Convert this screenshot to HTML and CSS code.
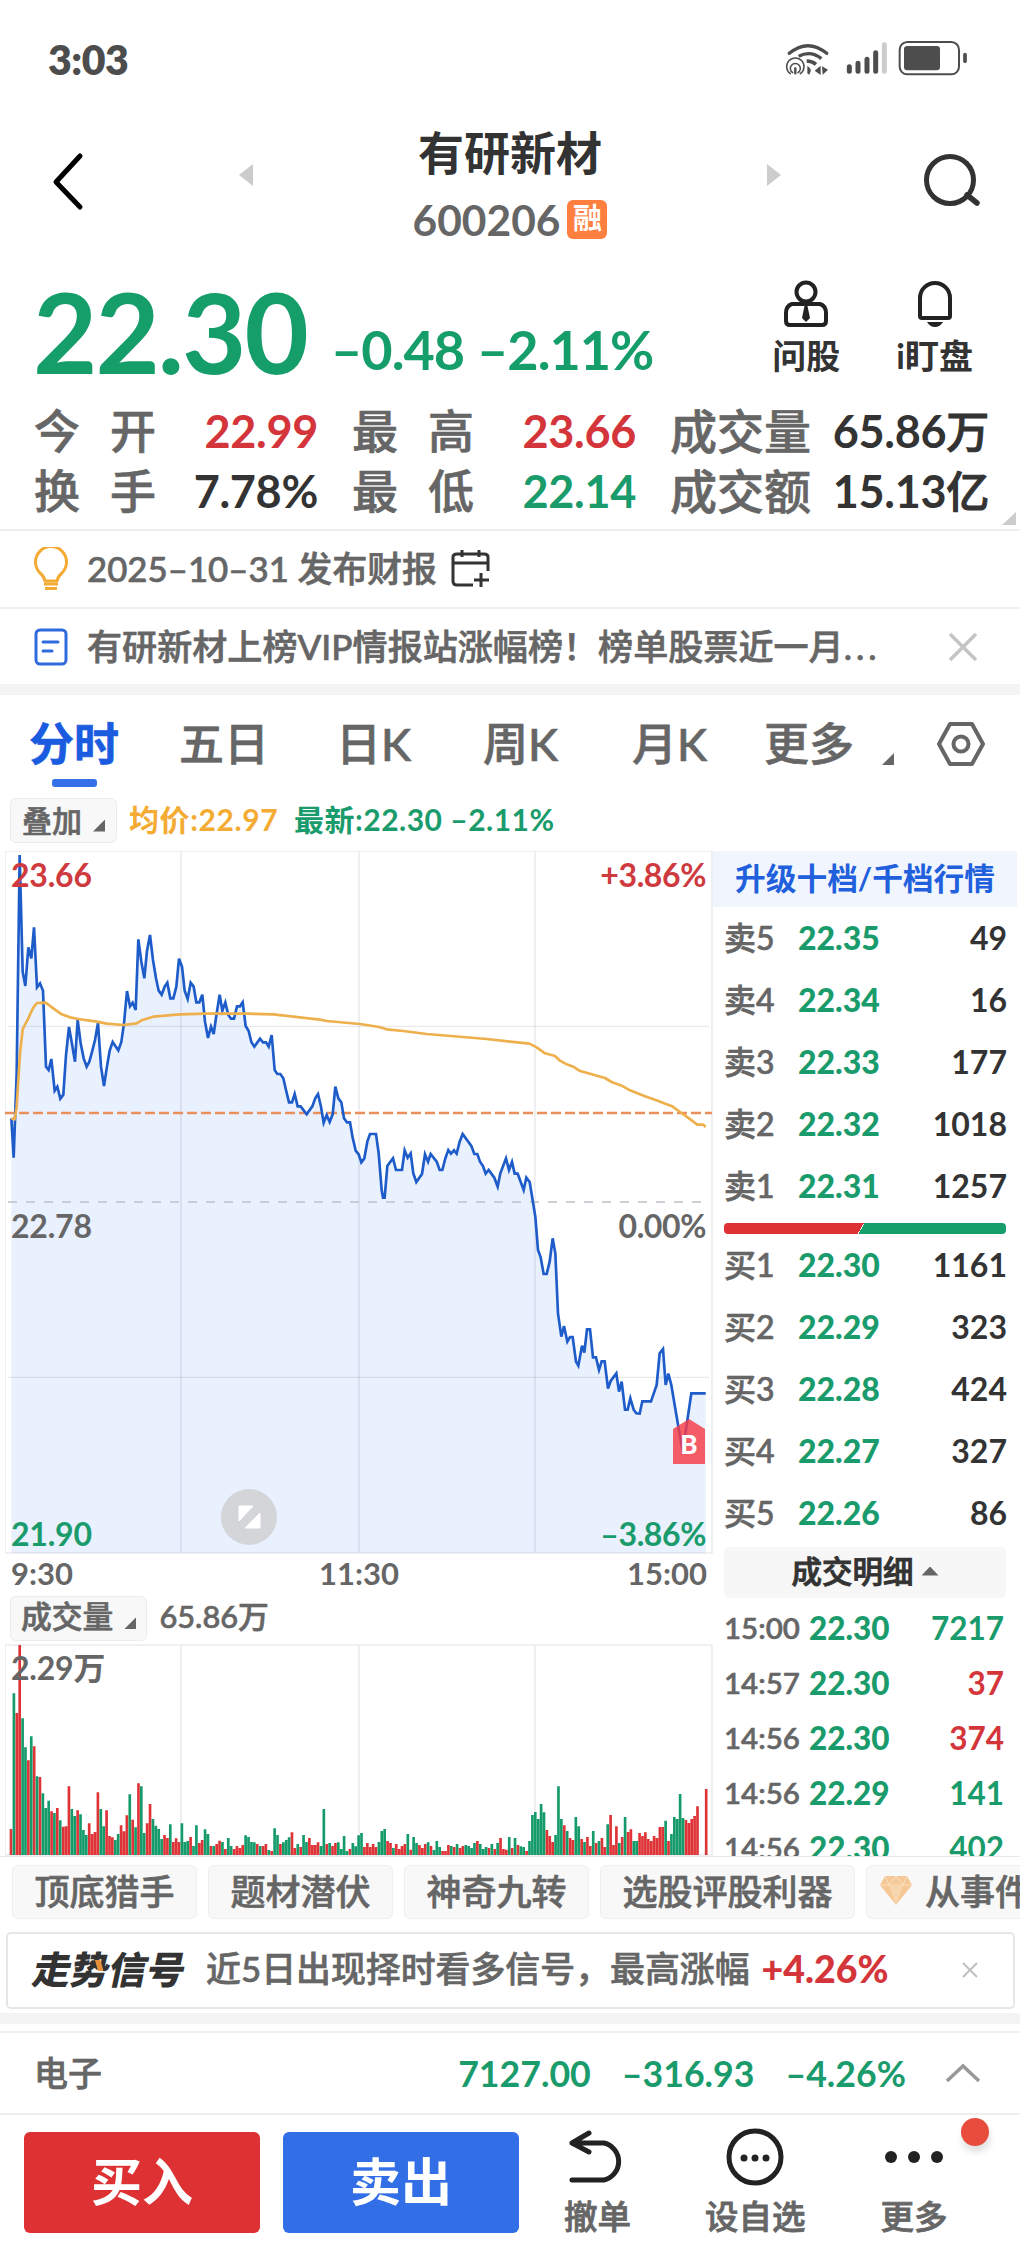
FILE: index.html
```html
<!DOCTYPE html>
<html lang="zh-CN">
<head>
<meta charset="utf-8">
<title>有研新材 600206</title>
<link rel="stylesheet" href="styles.css">
</head>
<body>
<header class="status">
  <span class="clock">3:03</span>
  <svg class="status-icons" width="200" height="40" viewBox="0 0 600 120">
    <g fill="none" stroke="#4d4d4d" stroke-linecap="round">
      <path d="M28 43Q84 -3 140 43" stroke-width="10"/>
      <path d="M56 52Q92 33 124 59" stroke-width="10" stroke-linecap="butt"/>
      <path d="M80 66Q96 66 108 76" stroke-width="11" stroke-linecap="butt"/>
      <path d="M31 104A26 26 0 1 1 61 104" stroke-width="4.500"/>
      <path d="M38 101A15 15 0 1 1 54 101" stroke-width="4.500"/>
      <path d="M46 88V103" stroke-width="7"/>
    </g>
    <path d="M82 80Q100 92 87 107L82 103ZM104 95L122 80V108ZM126 82L144 92 128 107Z" fill="#4d4d4d"/>
    <g stroke="#4d4d4d" stroke-width="15" stroke-linecap="round">
      <path d="M208 83V97M234 73V97M261 61V97M287 41V97"/>
      <path d="M313 17V97" stroke="#ccc"/>
    </g>
    <rect x="359" y="9" width="178" height="97" rx="23" fill="none" stroke="#4d4d4d" stroke-width="6"/>
    <rect x="372" y="21" width="108" height="73" rx="10" fill="#4d4d4d"/>
    <path d="M555 47V67" stroke="#4d4d4d" stroke-width="11" stroke-linecap="round"/>
  </svg>
</header>

<nav class="titlebar">
  <svg width="34" height="60" viewBox="0 0 34 60"><path d="M29 4L5 30L29 55" fill="none" stroke="#000" stroke-width="5" stroke-linecap="round" stroke-linejoin="round"/></svg>
  <i class="tri-left"></i>
  <div class="title">
    <h1>有研新材</h1>
    <p><span>600206</span><b class="badge">融</b></p>
  </div>
  <i class="tri-right"></i>
  <svg width="60" height="56" viewBox="0 0 60 56"><circle cx="27" cy="26" r="23.500" fill="none" stroke="#333" stroke-width="5"/><path d="M44 41L54 49" stroke="#333" stroke-width="5.500" stroke-linecap="round"/></svg>
</nav>

<section class="quote">
  <span class="price">22.30</span>
  <span class="diff">–0.48</span>
  <span class="diff pct">–2.11%</span>
  <div class="tools">
    <div>
      <svg width="46" height="48" viewBox="0 0 46 48" fill="none" stroke="#222" stroke-width="4"><circle cx="23" cy="12" r="9.500"/><path d="M9 24H37Q43 26 43 33V41Q43 45 39 45H7Q3 45 3 41V33Q3 26 9 24Z"/><path d="M21.500 26H24.500L27 38L23 42L19 38Z" fill="#222" stroke="none"/></svg>
      <span>问股</span>
    </div>
    <div>
      <svg width="40" height="48" viewBox="0 0 40 48"><path d="M5 36V18A15 15 0 0 1 35 18V36Q35 38 33 38H7Q5 38 5 36Z" fill="none" stroke="#222" stroke-width="4"/><path d="M12 42H28Q25 47 20 47T12 42Z" fill="#222"/></svg>
      <span>i盯盘</span>
    </div>
  </div>
</section>

<section class="stats">
  <dl><dt class="wide">今开</dt><dd class="up">22.99</dd></dl>
  <dl><dt class="wide">最高</dt><dd class="up">23.66</dd></dl>
  <dl><dt>成交量</dt><dd>65.86<small>万</small></dd></dl>
  <dl><dt class="wide">换手</dt><dd>7.78%</dd></dl>
  <dl><dt class="wide">最低</dt><dd class="down">22.14</dd></dl>
  <dl><dt>成交额</dt><dd>15.13<small>亿</small></dd></dl>
  <i class="expand"></i>
</section>

<div class="notice">
  <svg width="36" height="44" viewBox="0 0 36 44" fill="none" stroke="#f3ab34" stroke-width="3"><path d="M12 34Q11 29 7 26A15.500 15.500 0 1 1 29 26Q25 29 24 34Z" stroke-linejoin="round"/><path d="M11 37H25M12 41.500H24"/></svg>
  <span class="date">2025–10–31 发布财报</span>
  <svg width="40" height="40" viewBox="0 0 40 40" fill="none" stroke="#333" stroke-width="3"><path d="M22 36H6Q2 36 2 32V8Q2 5 6 5H33Q37 5 37 8V22M2 14H37M11 1V8M28 1V8M30 24V38M23 31H38"/></svg>
</div>
<div class="notice second">
  <svg width="36" height="40" viewBox="0 0 36 40" fill="none" stroke="#2f6bdc" stroke-width="3"><rect x="3" y="3" width="30" height="34" rx="4"/><path d="M10 15H25M10 24H19" stroke-linecap="round"/></svg>
  <span>有研新材上榜VIP情报站涨幅榜！榜单股票近一月<span class="dots">...</span></span>
  <svg class="close" width="30" height="30" viewBox="0 0 30 30"><path d="M2 2L28 28M28 2L2 28" stroke="#c4c4c4" stroke-width="3.500"/></svg>
</div>
<div class="band"></div>

<nav class="tabs">
  <span class="on">分时</span><span>五日</span><span>日K</span><span>周K</span><span>月K</span><span>更多</span>
  <i class="corner"></i>
  <svg width="48" height="46" viewBox="0 0 48 46" fill="none" stroke="#666" stroke-width="4"><path d="M13 3H35L46 23L35 43H13L2 23Z" stroke-linejoin="round"/><circle cx="24" cy="23" r="7.500"/></svg>
</nav>

<div class="legend">
  <span class="chip">叠加<i class="corner"></i></span>
  <span class="avg">均价:22.97</span>
  <span class="last">最新:22.30 –2.11%</span>
</div>

<main class="board">
  <section class="charts">
    <div class="price-chart">
      <svg width="708" height="703" viewBox="15 33 2124 2109" id="price">
        <path d="M15 33H2136V2139H15ZM543 33V2139M1077 33V2139M1605 33V2139" fill="none" stroke="#ebecee" stroke-width="5"/>
        <path id="area" fill="#2468f2" fill-opacity=".1"/>
        <path d="M24 559H2127M24 1612H2127" stroke="#000" stroke-opacity=".1" stroke-width="3"/>
        <path d="M24 1086H2120" stroke="#bfc1c8" stroke-width="5" stroke-dasharray="27 27"/>
        <path d="M15 819H2136" stroke="#e98f5c" stroke-width="8" stroke-dasharray="30 12"/>
        <path id="line" fill="none" stroke="#1e5cca" stroke-width="8" stroke-linejoin="miter"/>
        <path id="mean" fill="none" stroke="#eeb04c" stroke-width="8" stroke-linejoin="round"/>
      </svg>
      <span class="lab tl up">23.66</span><span class="lab tr up">+3.86%</span>
      <span class="lab ml">22.78</span><span class="lab mr">0.00%</span>
      <span class="lab bl down">21.90</span><span class="lab br down">–3.86%</span>
      <svg class="rotate" width="56" height="56" viewBox="0 0 56 56"><circle cx="28" cy="28" r="28" fill="#d3d5d9"/><path d="M18 17H32L18 32ZM39 24V39H24Z" fill="#fff" stroke="#fff" stroke-linejoin="round"/></svg>
      <span class="buy-flag">B</span>
    </div>
    <div class="axis"><span>9:30</span><span>11:30</span><span>15:00</span></div>
    <div class="vol-head"><span class="chip">成交量<i class="corner"></i></span><span class="vol-total">65.86万</span></div>
    <div class="vol-chart">
      <svg width="708" height="212" viewBox="15 255 2124 636" id="volume">
        <path d="M15 258H2136V888H15ZM543 258V888M1077 258V888M1605 258V888" fill="none" stroke="#ebecee" stroke-width="5"/>
        <path id="vr" stroke="#de3337" stroke-width="8"/>
        <path id="vg" stroke="#159b6a" stroke-width="8"/>
      </svg>
      <span class="lab">2.29万</span>
    </div>
  </section>
  <aside class="book">
    <div class="promo">升级十档/千档行情</div>
    <ul class="depth">
      <li><span>卖5</span><b>22.35</b><em>49</em></li>
      <li><span>卖4</span><b>22.34</b><em>16</em></li>
      <li><span>卖3</span><b>22.33</b><em>177</em></li>
      <li><span>卖2</span><b>22.32</b><em>1018</em></li>
      <li><span>卖1</span><b>22.31</b><em>1257</em></li>
    </ul>
    <div class="ratio"></div>
    <ul class="depth">
      <li><span>买1</span><b>22.30</b><em>1161</em></li>
      <li><span>买2</span><b>22.29</b><em>323</em></li>
      <li><span>买3</span><b>22.28</b><em>424</em></li>
      <li><span>买4</span><b>22.27</b><em>327</em></li>
      <li><span>买5</span><b>22.26</b><em>86</em></li>
    </ul>
    <div class="detail-head">成交明细<i></i></div>
    <ul class="ticks">
      <li><span>15:00</span><b>22.30</b><em class="down">7217</em></li>
      <li><span>14:57</span><b>22.30</b><em class="up">37</em></li>
      <li><span>14:56</span><b>22.30</b><em class="up">374</em></li>
      <li><span>14:56</span><b>22.29</b><em class="down">141</em></li>
      <li><span>14:56</span><b>22.30</b><em class="down">402</em></li>
    </ul>
  </aside>
</main>

<div class="tags">
  <span>顶底猎手</span><span>题材潜伏</span><span>神奇九转</span><span>选股评股利器</span>
  <span class="gem"><svg width="34" height="32" viewBox="0 0 34 32"><path d="M6 1H28L33 10L17 30L1 10Z" fill="#f5c895"/><path d="M6 1L10 10L17 1L24 10L28 1M1 10H33" fill="none" stroke="#fbe3c4"/><path d="M10 10H24L17 30Z" fill="#f8d7ae"/></svg>从事件</span>
</div>

<div class="signal">
  <span class="logo">走势信号<i></i></span>
  <span class="msg">近5日出现择时看多信号，最高涨幅</span><b>+4.26%</b>
  <svg width="16" height="16" viewBox="0 0 16 16"><path d="M1 1L15 15M15 1L1 15" stroke="#c0c0c0" stroke-width="2"/></svg>
</div>
<div class="band low"></div>

<div class="sector">
  <span class="name">电子</span><b>7127.00</b><b>–316.93</b><b>–4.26%</b>
  <svg width="36" height="20" viewBox="0 0 36 20"><path d="M2 18L18 3L34 18" fill="none" stroke="#999" stroke-width="3.500"/></svg>
</div>

<footer class="actions">
  <button class="buy">买入</button>
  <button class="sell">卖出</button>
  <div class="act undo">
    <svg width="60" height="56" viewBox="0 0 60 56" fill="none" stroke="#222" stroke-width="5" stroke-linecap="round" stroke-linejoin="round"><path d="M21 4L4 14L21 23M4 14H36A19 19 0 0 1 36 51H4"/></svg>
    <span>撤单</span>
  </div>
  <div class="act fav">
    <svg width="60" height="60" viewBox="0 0 60 60"><circle cx="30" cy="30" r="26" fill="none" stroke="#222" stroke-width="5"/><g fill="#222"><circle cx="19" cy="31" r="3.500"/><circle cx="30" cy="31" r="3.500"/><circle cx="41" cy="31" r="3.500"/></g></svg>
    <span>设自选</span>
  </div>
  <div class="act more">
    <svg width="60" height="60" viewBox="0 0 60 60" fill="#222"><circle cx="7" cy="30" r="6"/><circle cx="30" cy="30" r="6"/><circle cx="53" cy="30" r="6"/></svg>
    <span>更多</span>
    <i class="dot"></i>
  </div>
</footer>
<script src="chart.js"></script>
</body>
</html>
```
FILE: styles.css
```css
* { box-sizing: border-box; margin: 0; padding: 0; }
body { width: 1020px; height: 2250px; overflow: hidden; background: #fff; color: #333; font-family: Lato, "Noto Sans CJK SC", sans-serif; font-weight: 500; }
i, em { font-style: normal; }
ul { list-style: none; }
svg { display: block; flex: none; }
span, b, em, dt, dd { white-space: nowrap; }
.up { color: #d4353a; }
.down { color: #1a9b6c; }
.corner { width: 12px; height: 12px; background: #666; clip-path: polygon(100% 0, 100% 100%, 0 100%); }

/* Medium-weight Chinese labels */
.stats dt, .notice span, .tabs span, .chip, .depth span, .tags span, .msg, .vol-total, .name { -webkit-text-stroke: .65px currentColor; }

.status { height: 110px; padding: 30px 40px 0 48px; display: flex; justify-content: space-between; align-items: flex-start; }
.status-icons { margin-top: 9px; }
.clock { font-size: 41px; line-height: 60px; font-weight: 800; color: #4d4d4d; letter-spacing: -.5px; }

.titlebar { height: 160px; padding: 0 37px 0 51px; display: flex; align-items: flex-start; }
.titlebar > svg { margin-top: 42px; }
.titlebar > svg:last-child { margin: 44px 0 0 auto; }
.tri-left, .tri-right { width: 14px; height: 22px; background: #ccc; margin-top: 54px; }
.tri-left { clip-path: polygon(0 50%, 100% 0, 100% 100%); margin-left: 154px; }
.tri-right { clip-path: polygon(100% 50%, 0 0, 0 100%); }
.title { width: 514px; text-align: center; }
.title h1 { font-size: 46px; line-height: 60px; margin-top: 13px; font-weight: 700; }
.title p { display: flex; align-items: center; justify-content: center; gap: 7px; height: 56px; margin-top: 8px; font-size: 42.500px; font-weight: 700; color: #666; }
.badge { width: 40px; height: 39px; line-height: 36px; border-radius: 6px; background: #ff7f40; color: #fff; font-size: 29px; font-weight: 700; }

.quote { height: 130px; display: flex; padding: 0 47px 0 33px; color: #159d6a; font-weight: 700; }
.price { font-size: 111px; line-height: 122px; letter-spacing: -2px; width: 298px; }
.diff { font-size: 54px; line-height: 160px; width: 146px; letter-spacing: -1px; }
.tools { margin-left: auto; display: flex; gap: 56px; color: #333; font-size: 34px; line-height: 40px; }
.tools div { display: flex; flex-direction: column; align-items: center; padding-top: 10px; }
.tools span { margin-top: 8px; }

.stats { height: 131px; position: relative; display: grid; grid-template-columns: 284px 284px 319px; grid-auto-rows: 60px; column-gap: 34px; padding: 2px 34px; border-bottom: 2px solid #efefef; }
.stats dl { display: flex; justify-content: space-between; line-height: 58px; font-size: 45px; }
.stats dt { color: #666; font-size: 47px; font-weight: 500; }
.stats .wide { letter-spacing: 30px; font-size: 46px; }
.stats dd { font-weight: 700; letter-spacing: -.3px; }
.stats small { font-size: 43px; font-weight: 500; -webkit-text-stroke: 1px currentColor; }
.expand { position: absolute; right: 4px; bottom: 4px; width: 14px; height: 13px; background: #ccc; clip-path: polygon(100% 0, 100% 100%, 0 100%); }

.notice { height: 78px; padding: 0 42px 0 33px; display: flex; align-items: center; font-size: 35.100px; color: #666; border-bottom: 2px solid #efefef; }
.notice > span { margin: -5px 0 0 18px; }
.notice .date { font-size: 34.800px; }
.notice .date + svg { margin-left: 14px; }
.notice.second { height: 75px; border: 0; }
.second .dots { letter-spacing: 4px; }
.close { margin-left: auto; }
.band { height: 11px; background: #f4f4f4; }
.band.low { margin-top: 4px; }

.tabs { height: 100px; display: flex; padding-left: 29px; font-size: 45px; line-height: 98px; color: #666; font-weight: 500; }
.tabs span:nth-child(1) { width: 150px; }
.tabs span:nth-child(2) { width: 157px; }
.tabs span:nth-child(3) { width: 147px; }
.tabs span:nth-child(4) { width: 149px; }
.tabs span:nth-child(5) { width: 132px; }
.tabs span:nth-child(6) { width: 118px; }
.tabs .on { color: #1a5be0; font-weight: 700; position: relative; }
.tabs .on::after { content: ""; position: absolute; left: 23px; top: 84px; width: 45px; height: 8px; border-radius: 3px; background: #3470e8; }
.tabs .corner { margin-top: 58px; }
.tabs svg { margin: 26px 0 0 43px; }

.legend { height: 56px; display: flex; align-items: flex-start; padding: 3px 10px; font-size: 30px; line-height: 43px; font-weight: 700; }
.chip { display: flex; align-items: center; height: 45px; line-height: 40px; padding: 0 11px 2px; border: 1px solid #ececec; border-radius: 6px; background: #f8f8f8; color: #666; font-weight: 500; }
.chip .corner { margin: 12px 0 0 11px; }
.avg { color: #f3ab34; margin-left: 12px; width: 165px; letter-spacing: .6px; }
.last { color: #1a9b6c; letter-spacing: .5px; }

.board { height: 1006px; display: grid; grid-template-columns: 713px 304px; overflow: hidden; border-bottom: 1px solid #e9e9e9; }
.charts { padding-left: 5px; }
.price-chart, .vol-chart { position: relative; }
.lab { position: absolute; font-size: 32px; line-height: 40px; font-weight: 700; color: #666; left: 6px; top: 4px; letter-spacing: -.2px; }
.lab.up { color: #cf3a3e; }
.lab.down { color: #1a9b6c; }
.tr, .mr, .br { left: auto; right: 7px; letter-spacing: -.4px; }
.ml, .mr { top: 355px; }
.bl, .br { top: 663px; }
.rotate { position: absolute; left: 216px; top: 638px; }
.buy-flag { position: absolute; left: 668px; top: 568px; width: 32px; height: 45px; padding-top: 9px; background: rgba(247, 60, 70, .82); clip-path: polygon(50% 0, 100% 22%, 100% 100%, 0 100%, 0 22%); color: #fff; font-size: 26px; line-height: 32px; font-weight: 900; text-align: center; }
.axis { height: 39px; display: grid; grid-template-columns: 1fr 1fr 1fr; padding: 0 6px 0 6px; font-size: 31px; line-height: 38px; font-weight: 700; color: #666; }
.axis span:nth-child(2) { text-align: center; }
.axis span:nth-child(3) { text-align: right; }
.vol-head { height: 51px; display: flex; align-items: center; gap: 12px; padding-left: 5px; font-size: 30.800px; line-height: 44px; color: #666; }
.vol-head .chip { padding: 0 10px 3px; }
.vol-head .vol-total { padding-bottom: 3px; }

.book { padding-left: 11px; }
.promo { margin-left: -11px; height: 56px; background: #f1f5fd; color: #2160dd; font-size: 30.700px; line-height: 56px; font-weight: 700; text-align: center; }
.depth { height: 310px; width: 283px; }
.depth li { height: 62px; display: grid; grid-template-columns: 74px 1fr auto; align-items: center; font-size: 32px; line-height: 44px; font-weight: 700; }
.depth span { color: #666; font-weight: 500; }
.depth b, .ticks b { color: #1a9b6c; }
.ratio { width: 282px; height: 11px; margin: 6px 0 0; border-radius: 4px; background: linear-gradient(120deg, #de3133 0 48.500%, #fff 48.500% 48.800%, #159d6a 48.800%); }
.detail-head { width: 282px; height: 51px; margin-top: 3px; padding-bottom: 3px; border-radius: 5px; background: #f7f7f7; display: flex; align-items: center; justify-content: center; gap: 8px; font-size: 30.500px; line-height: 44px; -webkit-text-stroke: .9px currentColor; }
.detail-head i { width: 17px; height: 9px; background: #666; clip-path: polygon(50% 0, 100% 100%, 0 100%); }
.ticks { margin-top: 2px; }
.ticks li { height: 55px; width: 280px; display: grid; grid-template-columns: 85px 1fr auto; align-items: center; font-size: 31.500px; line-height: 44px; font-weight: 700; }
.ticks span { color: #666; font-size: 29.500px; font-weight: 600; -webkit-text-stroke: .5px currentColor; }

.tags { height: 70px; padding: 8px 0 0 12px; display: flex; gap: 11px; width: 1020px; overflow: hidden; font-size: 35px; color: #666; }
.tags span { flex: none; height: 54px; line-height: 50px; padding: 0 21.500px; border: 1px solid #efefef; border-radius: 6px; background: #f8f8f8; }
.tags .gem { display: flex; gap: 12px; padding: 0 12px; }
.gem svg { margin-top: 9px; }

.signal { margin: 5px 5px 0 6px; height: 77px; border: 2px solid #e6e6e6; border-radius: 5px; display: flex; align-items: center; padding: 0 35px 4px 26px; font-size: 34.900px; line-height: 48px; color: #666; }
.logo { position: relative; font-size: 38px; font-weight: 900; color: #333; transform: skewX(-12deg); width: 152px; margin-right: 20px; }
.logo i { position: absolute; left: 59px; top: 15px; width: 11px; height: 11px; background: #e8913c; clip-path: polygon(0 0, 50% 0, 100% 100%, 50% 100%); }
.signal b { color: #d4353a; margin-left: 12px; font-size: 37.500px; font-weight: 900; }
.signal svg { margin: 3px 0 0 auto; }

.sector { height: 84px; margin-top: 7px; border-top: 2px solid #efefef; border-bottom: 2px solid #efefef; display: flex; align-items: center; padding: 0 39px 0 34px; font-size: 35px; color: #666; }
.sector b { color: #1a9b6c; margin-left: 31px; font-size: 35.700px; }
.sector .name { margin: -3px auto 0 0; font-size: 34px; }
.sector svg { margin-left: 39px; }

.actions { height: 135px; display: flex; padding: 17px 0 0 24px; }
.actions button { width: 236px; height: 101px; padding-bottom: 2px; border: 0; border-radius: 6px; color: #fff; font: 700 51px/60px Lato, "Noto Sans CJK SC", sans-serif; margin-right: 23px; background: #de3133; }
.actions .sell { background: #326fe6; }
.act { position: relative; display: flex; flex-direction: column; align-items: center; font-size: 33.500px; line-height: 40px; color: #666; -webkit-text-stroke: .8px currentColor; margin-top: -5px; }
.act svg { height: 60px; margin-bottom: 9px; }
.undo { margin-left: 22px; }
.fav { margin-left: 74px; }
.more { margin-left: 75px; }
.dot { position: absolute; left: 80px; top: -9px; width: 28px; height: 28px; border-radius: 50%; background: #e74c3c; box-shadow: 1px 6px 7px rgba(0, 0, 0, .13); }
```
FILE: chart.js
```js
// Minute prices as x,y pairs in chart units.
const price = "34,835 41,953 50,700 59,45 68,395 76,438 85,322 94,355 102,262 111,442 120,430 129,452 138,680 146,690 154,657 164,752 172,740 181,776 190,764 198,645 207,561 216,612 225,665 233,540 242,610 251,655 260,680 268,665 277,632 285,600 294,549 303,680 312,738 320,685 329,632 338,606 346,618 355,631 364,606 372,550 381,453 390,499 398,488 407,510 415,298 424,365 433,415 441,332 450,285 459,360 468,415 476,452 485,464 494,440 502,428 511,475 520,475 529,440 537,356 546,380 554,452 563,477 572,428 581,440 589,487 598,487 607,464 615,545 624,594 633,560 641,582 650,520 659,464 667,512 676,487 685,525 693,536 702,536 711,499 720,499 728,487 737,558 746,573 754,606 763,620 780,596 789,607 798,607 806,620 815,585 824,690 832,702 841,702 850,715 858,750 867,787 876,787 884,762 893,799 902,799 920,823 937,799 946,774 954,762 963,800 971,848 980,825 989,846 998,823 1006,740 1015,775 1024,787 1032,835 1041,847 1050,847 1058,893 1067,932 1076,943 1084,967 1093,955 1102,905 1110,882 1128,882 1136,940 1145,1050 1149,1073 1154,1073 1162,978 1170,967 1179,955 1188,990 1206,990 1214,931 1223,953 1232,940 1240,1000 1249,1026 1266,1002 1275,943 1284,965 1292,942 1310,965 1319,990 1327,990 1336,955 1345,930 1353,941 1362,931 1370,941 1379,905 1388,882 1414,918 1423,942 1432,942 1440,965 1449,978 1457,1001 1466,990 1483,1013 1493,1040 1501,1000 1518,955 1527,990 1536,966 1544,1001 1553,1001 1571,1050 1579,1013 1589,1026 1597,1075 1606,1130 1614,1230 1622,1252 1631,1302 1640,1302 1649,1265 1658,1195 1666,1240 1674,1420 1684,1490 1692,1458 1702,1505 1710,1491 1718,1491 1728,1565 1735,1577 1746,1517 1753,1538 1761,1468 1770,1468 1779,1552 1788,1552 1797,1590 1805,1564 1814,1564 1824,1646 1832,1623 1849,1600 1857,1655 1865,1625 1875,1709 1883,1709 1891,1675 1901,1709 1909,1720 1919,1721 1927,1684 1953,1684 1970,1635 1979,1540 1989,1527 1997,1635 2005,1601 2014,1635 2024,1695 2048,1835 2074,1660 2117,1660";
const mean = "34,835 44,838 50,800 60,640 68,568 76,552 85,535 94,515 102,500 111,489 137,488 160,505 185,523 210,532 235,537 290,545 320,551 370,555 410,550 425,541 460,530 540,523 620,521 740,521 820,523 960,539 980,543 1080,552 1137,561 1160,568 1210,573 1280,582 1460,597 1588,611 1610,622 1635,640 1665,648 1680,662 1700,673 1720,680 1738,692 1815,714 1835,726 1865,737 1890,751 1935,769 1975,783 2000,793 2017,799 2040,816 2060,830 2092,854 2110,854 2117,861";
document.getElementById("line").setAttribute("d", "M" + price);
document.getElementById("mean").setAttribute("d", "M" + mean);
document.getElementById("area").setAttribute("d", "M34,2139 L" + price + " L2117,2139Z");

// One bar per minute: r = rising, g = falling, followed by the top of the bar.
const bars = "r810 g403 r462 r258 g478 g565 r604 g532 r562 g652 r654 g703 g747 g725 r757 g762 r747 g784 r803 r802 r682 g750 g771 r754 g766 g813 g828 r793 r825 r819 r700 g750 g802 r754 r831 r835 g843 g825 r799 r817 r769 g706 r782 g805 r673 g682 g822 r793 r735 g780 g800 g810 g840 r828 r837 g796 r849 r838 r849 g793 g849 g846 r834 g861 g799 r852 r843 g811 g825 r861 g861 r855 r845 g849 r870 g837 g861 r870 r861 r867 r858 g829 g834 g849 g850 r855 g861 r861 r855 g873 r876 g808 g828 r855 g850 g843 g835 r820 r867 g855 r864 g828 g849 r837 r858 r858 r850 g861 g750 r855 g852 r861 r852 g850 g870 g831 g876 r870 g852 g862 g829 g822 r864 r852 r864 r855 r864 g849 g816 g810 r846 r852 g867 r855 r870 r861 r855 g825 r872 g834 g852 r858 r867 r855 g850 r861 g873 g846 g864 r876 r876 r858 g861 r864 g855 r867 r861 g858 g861 g867 g852 r846 g855 g870 g864 r867 g855 r870 g852 r837 r870 r872 g834 r867 g837 r858 g862 g864 r876 g846 g768 g759 g780 g735 g760 r813 r831 r849 g828 g682 g780 r799 g816 r837 r843 g774 g802 r840 g849 r834 r861 g816 r852 g846 r837 r864 g796 r768 r858 r802 g852 r834 g774 r819 r811 g846 g846 r822 r831 r820 r840 r846 r831 r837 r804 r804 g785 r846 g825 g774 g780 g705 g777 r783 r792 r780 r771 r742 r888 r888 r690".split(" ");
const paths = { r: "", g: "" };
bars.forEach((bar, i) => {
  paths[bar[0]] += `M${(33 + i * 8.69).toFixed(1)} 888V${bar.slice(1)}`;
});
document.getElementById("vr").setAttribute("d", paths.r);
document.getElementById("vg").setAttribute("d", paths.g);
```
